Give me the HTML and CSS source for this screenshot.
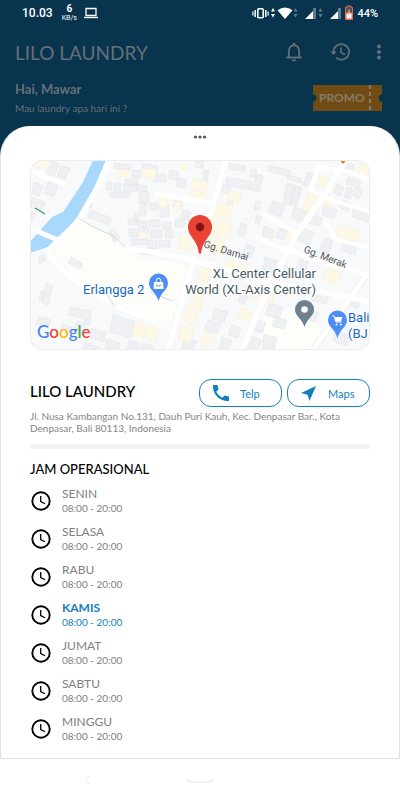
FILE: index.html
```html
<!DOCTYPE html>
<html lang="id">
<head>
  <meta charset="UTF-8">
  <meta name="viewport" content="width=device-width, initial-scale=1">
  <title>Lilo Laundry</title>
  <link rel="stylesheet" href="styles.css">
</head>
<body>

  <div class="status-bar">
    <span class="clock">10.03</span>
    <span class="speed"><b>6</b><small>KB/s</small></span>
    <svg class="laptop" width="16" height="12" viewBox="0 0 16 12">
      <path d="M3 1.5h10v7H3z" fill="none" stroke="#fff" stroke-width="1.3"/>
      <path d="M1 10.5h14" stroke="#fff" stroke-width="1.4"/>
    </svg>
    <svg class="signals" width="102" height="16" viewBox="0 0 102 16">
      <g fill="none" stroke="#fff">
        <rect x="5.8" y="3.8" width="5.4" height="9" rx="1" stroke-width="1.6"/>
        <path d="M3.2 5v7M13.8 5v7" stroke-width="1.5"/>
        <path d="M.9 6.5v4M16.1 6.5v4" stroke-width="1.2"/>
      </g>
      <path d="M21 3l2 3.5h-4zM21 12.5l2-3.5h-4z" fill="#fff"/>
      <path d="M25.5 5.2Q33 0 40.5 5.2L33 14z" fill="#fff"/>
      <path d="M43.5 3l2 3.5h-4zM43.5 12.5l2-3.5h-4zM68.5 3l2 3.5h-4zM68.5 12.5l2-3.5h-4z" fill="#5c7c90"/>
      <path d="M64 3v11H53zM89 3v11H78z" fill="#fff"/>
      <path d="M61 3h3v11h-3zM86 3h3v11h-3z" fill="#5c7c90"/>
      <path d="M93.5 2.5H95V1h4v1.5h1.5v12h-7z" fill="#4c4c55" stroke="#e2684c"/>
      <path d="M94 8h6v6h-6z" fill="#fff" stroke="#e2684c"/>
      <path d="M97 4v6M95.5 7h3" stroke="#f5a28d"/>
    </svg>
    <span class="battery">44%</span>
  </div>

  <header class="app-bar">
    <h1>LILO LAUNDRY</h1>
    <button type="button" aria-label="Notifikasi">
      <svg width="20" height="20" viewBox="0 0 20 20">
        <path d="M4.8 15.5V9a5.2 5.7 0 0 1 10.4 0v6.5" fill="none" stroke="#647078" stroke-width="1.8"/>
        <path d="M2.5 15.5h15" stroke="#647078" stroke-width="1.8"/>
        <path d="M8.7 3.5V2a1.3 1.3 0 0 1 2.6 0v1.5zM8 17.5h4a2 2 0 0 1-4 0z" fill="#647078"/>
      </svg>
    </button>
    <button type="button" aria-label="Riwayat">
      <svg width="20" height="20" viewBox="0 0 20 20">
        <path d="M3.5 10a7.8 7.8 0 1 1 2.5 5.6" fill="none" stroke="#647078" stroke-width="1.8"/>
        <path d="M.3 9.5h6.4L3.5 13z" fill="#647078"/>
        <path d="M11 5.5v5l4 2.2" fill="none" stroke="#647078" stroke-width="1.5"/>
      </svg>
    </button>
    <button type="button" class="more" aria-label="Menu">
      <svg width="6" height="20" viewBox="0 0 6 20" fill="#647078">
        <circle cx="3" cy="4.5" r="2"/><circle cx="3" cy="10" r="2"/><circle cx="3" cy="15.5" r="2"/>
      </svg>
    </button>
  </header>

  <div class="greeting">
    <div>
      <p class="hello">Hai, Mawar</p>
      <p class="ask">Mau laundry apa hari ini ?</p>
    </div>
    <a class="promo" href="#promo">PROMO</a>
  </div>

  <main class="sheet">
    <svg class="handle" width="14" height="4" viewBox="0 0 14 4" fill="#555">
      <circle cx="2.5" cy="2" r="1.6"/><circle cx="7" cy="2" r="1.6"/><circle cx="11.5" cy="2" r="1.6"/>
    </svg>

    <svg class="map" viewBox="0 0 340 190" role="img" aria-label="Peta lokasi Lilo Laundry">
      <rect width="340" height="190" fill="#f8f9fa"/>
      <path d="M48 58L62 66L86 78L108 98L150 102L160 110L140 165L84 146L45 118L24 94L30 82z" fill="#fdfdfa"/>
      <path d="M235 145l45 8 15 25-12 12h-55z" fill="#fdfdfa"/>

      <!-- rumah -->
      <g fill="#eff0f3" stroke="#e4e6e9" stroke-width=".6">
        <path d="M21 1l8 3-5 13-8-3zM31 5l9 3-5 12-8-3zM18 22l10 4-4 11-10-4zM4 22l9 4-4 10-7-3zM2 37l13 5-4 9-11-4zM1 52l5 2-3 6-3-1z"/>
        <path d="M85 3l16 2-1 5-16-2zM102 10h8v8h-8zM113 3l15 3-1 7-15-3zM95 19h13v6H95zM76 22h6v8h-6zM84 23h7v8h-7zM93 24h14v7H93zM80 32h20v6H80zM103 24l14 2-1 7-13-2zM109 32h10v11h-10zM123 14h13v8h-13zM140 10l9 2-2 8-9-2zM148 18l9 2-2 8-9-2zM56 43h6v5h-6zM60 50l22 8-3 7-21-8zM110 43h6v12h-6zM120 43h8v7h-8zM130 44h9v13h-9zM145 38l8 2-2 8-8-2zM153 50l8 2-3 9-8-2zM104 53h5v8h-5zM98 59h9v6h-9zM83 68l8 9-7 5-5-10zM108 61h9v7h-9zM119 60h11v7h-11zM133 62h8v7h-8zM145 60h10v7h-10zM99 69h11v8H99zM112 68h7v7h-7zM121 70h11v8h-11zM135 70h8v8h-8zM101 79h17v6h-17zM119 80h8v9h-8zM129 80h11v7h-11zM110 88h10v6h-10z"/>
        <path d="M166 1l8 1-1 6-8-1zM174 10l5 1-2 12-4-1zM200 3l16 3-1 6-16-3zM197 17l25 5-1 8-25-5zM221 9l6 1-2 8-5-1zM227 14l6 2-4 16-7-2zM193 24l8 2-2 8-7-2zM239 5l22 6-2 6-21-6zM258 15l14 4-1 4-14-4zM257 23l8 3-4 19-8-2zM265 25l7 3-6 19-6-3zM278 12l5 2-6 13-5-2zM317 3l8 2-3 9-7-2zM318 17l13 4-2 7-13-4zM307 24l7 3-4 9-6-3zM317 27l6 2-3 10-6-2zM325 27l8 3-4 9-6-3zM312 40l9 3-3 8-8-3zM294 46l13 4-3 9-12-4zM323 47l17 5-2 10-16-5zM264 47l14 5-4 11-13-5zM243 41l12 4-4 12-13-5zM226 41l5 1-2 8-5-1zM227 55l5 2-3 7-4-1zM211 63l6 2-3 12-7-2zM199 37l5 2-2 8-5-2zM234 66l11 4-3 9-9-3zM249 68l9 3-4 9-8-3zM272 68l11 4-4 13-11-4zM281 55l12 4-4 7-11-3zM295 78l8 3-5 14-9-3zM312 82l15 5-2 8-14-5zM216 84l9 3-4 11-8-2z"/>
        <path d="M8 98l5-4 3 5-6 5zM41 97l12 7-3 5-12-6zM16 123l7 3-5 19-6-2zM11 131l4 1-2 9-4-1zM40 147l21 4-1 14-6-1 1-5-16-4zM32 164l10 3-3 7-9-3zM47 161l9 3-4 12-9-3zM9 157l12 3-2 7-13-3zM60 168l16 4-2 10-14-4zM83 155l21 6-3 17-21-6zM99 180l10 3-2 7h-10zM77 179l13 4-2 7H75zM112 183l11 3-1 4h-13zM54 183l18 5v2H53zM155 177l12 4-5 9h-11z"/>
        <path d="M235 97l12 4-4 12-11-3zM251 104l11 4-3 9-12-3zM211 134l7 3-3 7-7-2zM239 143l14 4-4 12-14-4zM245 157l12 3-3 9-12-3zM185 148l13 4-4 10-12-3zM178 160l13 4-4 10-13-4zM223 159l13 4-4 10-13-4zM220 176l12 4-4 10h-12zM234 174l13 4-3 12h-12zM202 165l9 3-4 10-9-3zM192 177l10 3-4 10h-9zM277 148l12 5-4 9-11-4zM284 130l15 5-3 9-15-4zM270 99l9 3-4 10-9-3zM320 136l11 4-3 9-10-4zM306 170l14 6-3 10-14-5z"/>
      </g>
      <g fill="#fef9e6" stroke="#f6f0de" stroke-width=".6">
        <path d="M8 0h10l-2 9-9-2zM87 10h10v7H87zM113 8l13 2-1 9-14-2zM151 4l8 1-1 5-8-1zM163 19l16 5-4 8-15-5zM161 30l16 4-2 8-15-4zM130 37l8 2-2 9-8-2zM145 41l6 2-2 8-5-1zM109 72h9v5h-9zM158 63l18 5-4 10-17-5zM150 75l15 4-3 12-14-3z"/>
        <path d="M168 20l9 2-2 9-8-2zM184 41l19 5-3 15-18-4zM182 60l20 5-3 14-18-4zM180 77l16 5-3 13-16-4zM198 31l14 4-2 8-13-3zM290 16l8 2-4 9-7-2zM278 33l14 7-6 16-14-7zM297 34l9 4-3 9-12-4zM260 70l5 3-3 7-8-3zM330 4l9 3-3 10-8-3zM309 66l21 5-2 11-22-5z"/>
        <path d="M106 162l11 3-2 13-13-3zM118 165l11 4-3 12-12-4zM168 123l9 3-4 14-11-4zM161 138l12 4-3 10-12-3zM156 151l12 4-3 10-11-3zM151 166l13 4-4 12-12-3zM170 107l11 3-4 12-10-3zM198 100l17 5-4 14-16-4zM215 125l30 10-3 9-29-9zM296 108l14 4-2 12-14-3zM174 172l9 3-5 12-8-3zM211 148l11 3-3 10-12-4zM251 125l12 4-2 9-14-4z"/>
      </g>

      <!-- sungai dan jalan -->
      <path d="M63 0L53 22L33 52L22 57L0 82V93L18 87L29 81L47 57L64 28L76 0z" fill="#a8d8fb"/>
      <g fill="none" stroke="#eff1f3" stroke-width="7">
        <path d="M196 0L181 52L163 102L138 190M316 0L293 37L266 75L233 140L212 190M338 113L283 190"/>
      </g>
      <g fill="none" stroke="#fff" stroke-width="6" stroke-linejoin="round">
        <path d="M79 0L67 28L48 61L18 90Q18 96 28 104Q42 124 84 144" stroke-width="5"/>
        <path d="M0 68L30 81M0 11L36 24M125 34L182 43" stroke-width="5"/>
        <path d="M196 0L181 52L163 102L138 190M316 0L293 37L266 75L233 140L212 190"/>
        <path d="M85 88L118 91L163 100L230 120L340 142M260 90L332 114H340M338 113L283 190" stroke-width="5"/>
        <path d="M289 3L281 30L293 37L340 52M287 7L316 11L340 19M232 54L267 73M225 77L256 90M292 62Q300 64 305 79L340 88" stroke-width="4"/>
        <path d="M85 146L140 168" stroke-width="3"/>
      </g>
      <path d="M48 58L60 65L83 76L95 87M84 146L77 134M120 132L142 141" fill="none" stroke="#c7c8c6" stroke-width=".7"/>
      <path d="M5 48l10 6" stroke="#3c9a5f" stroke-width="1.2"/>
      <path d="M311 0h4v2l-2 2-2-2z" fill="#d98a1c"/>

      <g class="street">
        <text x="173" y="87" transform="rotate(17 173 87)">Gg. Damai</text>
        <text x="273" y="92" transform="rotate(21 273 92)">Gg. Merak</text>
      </g>

      <g class="place">
        <text x="53" y="134" class="blue">Erlangga 2</text>
        <text x="286" y="118" text-anchor="end">XL Center Cellular</text>
        <text x="286" y="134" text-anchor="end">World (XL-Axis Center)</text>
        <text x="318" y="162" class="blue">Bali</text>
        <text x="318" y="178" class="blue">(BJ</text>
      </g>

      <path d="M119 123a9.5 9.5 0 0 1 19 0c0 7-6.5 8-9.5 18-3-10-9.5-11-9.5-18z" fill="#4d8df6"/>
      <path d="M124 122h9l.6 7h-10z" fill="#fff"/>
      <path d="M126.3 122v-1.5a2.2 2.2 0 0 1 4.4 0v1.5" fill="none" stroke="#fff"/>
      <path d="M126 125q2.5 2.5 5 0" fill="none" stroke="#4d8df6"/>

      <path d="M265 149.5a9.5 9.5 0 0 1 19 0c0 7-6.5 8-9.5 17.5-3-9.5-9.5-10.5-9.5-17.5z" fill="#6c828e"/>
      <circle cx="274.5" cy="149.5" r="3.3" fill="#fff"/>

      <path d="M298 160a9.5 9.5 0 0 1 19 0c0 7-6.5 8-9.5 18-3-10-9.5-11-9.5-18z" fill="#4d8df6"/>
      <path d="M302 156h2l2 6h5.5" fill="none" stroke="#fff"/>
      <path d="M304.5 157h8l-1.5 4.5h-5z" fill="#fff"/>
      <circle cx="306.5" cy="164.5" r="1" fill="#fff"/><circle cx="311" cy="164.5" r="1" fill="#fff"/>

      <path d="M158 67a12 12 0 0 1 24 0c0 10-10 13-10.7 26.5h-2.6C168 80 158 77 158 67z" fill="#ea4335"/>
      <circle cx="170" cy="67" r="4.2" fill="#811411"/>

      <text x="7" y="178" class="google"><tspan fill="#4285f4">G</tspan><tspan fill="#ea4335">o</tspan><tspan fill="#fbbc05">o</tspan><tspan fill="#4285f4">g</tspan><tspan fill="#34a853">l</tspan><tspan fill="#ea4335">e</tspan></text>

      <rect x=".5" y=".5" width="339" height="189" rx="12" fill="none" stroke="#ececec"/>
    </svg>

    <div class="store">
      <h2>LILO LAUNDRY</h2>
      <a class="pill" href="#telp">
        <svg width="18" height="18" viewBox="0 0 18 18">
          <path d="M1 1h4.500l1 4.500-2.300 2.300a14 14 0 0 0 6 6l2.300-2.300 4.500 1V17h-1.500C7.500 17 1 10.500 1 2.500z" fill="#1280bd"/>
        </svg>
        Telp
      </a>
      <a class="pill" href="#maps">
        <svg width="18" height="18" viewBox="0 0 18 18">
          <path d="M16 2L1 9l6.500 1.800 2 6.200z" fill="#1280bd"/>
        </svg>
        Maps
      </a>
    </div>
    <p class="address">Jl. Nusa Kambangan No.131, Dauh Puri Kauh, Kec. Denpasar Bar., Kota Denpasar, Bali 80113, Indonesia</p>

    <hr>

    <h3>JAM OPERASIONAL</h3>
    <ul class="hours">
      <li><svg class="jam" viewBox="0 0 20 20"><use href="#jam"/></svg><div><p>SENIN</p><time>08:00 - 20:00</time></div></li>
      <li><svg class="jam" viewBox="0 0 20 20"><use href="#jam"/></svg><div><p>SELASA</p><time>08:00 - 20:00</time></div></li>
      <li><svg class="jam" viewBox="0 0 20 20"><use href="#jam"/></svg><div><p>RABU</p><time>08:00 - 20:00</time></div></li>
      <li class="today"><svg class="jam" viewBox="0 0 20 20"><use href="#jam"/></svg><div><p>KAMIS</p><time>08:00 - 20:00</time></div></li>
      <li><svg class="jam" viewBox="0 0 20 20"><use href="#jam"/></svg><div><p>JUMAT</p><time>08:00 - 20:00</time></div></li>
      <li><svg class="jam" viewBox="0 0 20 20"><use href="#jam"/></svg><div><p>SABTU</p><time>08:00 - 20:00</time></div></li>
      <li><svg class="jam" viewBox="0 0 20 20"><use href="#jam"/></svg><div><p>MINGGU</p><time>08:00 - 20:00</time></div></li>
    </ul>
  </main>

  <nav class="nav-bar">
    <button type="button" aria-label="Kembali">
      <svg width="8" height="12" viewBox="0 0 8 12"><path d="M6 2L2 6l4 4" fill="none" stroke="#e6e6e6"/></svg>
    </button>
    <button type="button" aria-label="Beranda">
      <svg width="28" height="8" viewBox="0 0 28 8"><path d="M1 2q1 4 5 4h16q4 0 5-4" fill="none" stroke="#e2e2e2"/></svg>
    </button>
  </nav>

  <svg class="defs" width="0" height="0">
    <symbol id="jam" viewBox="0 0 20 20">
      <circle cx="10" cy="10" r="8.7" fill="none" stroke="#000" stroke-width="1.9"/>
      <path d="M9.7 5v5.5l4.3 2.3" fill="none" stroke="#000" stroke-width="1.3"/>
    </symbol>
  </svg>

</body>
</html>
```
FILE: styles.css
```css
* {
  box-sizing: border-box;
}

body {
  margin: 0;
  min-height: 100vh;
  display: flex;
  flex-direction: column;
  background: #08344e;
  font-family: Lato, sans-serif;
}

h1, h2, h3, p, ul {
  margin: 0;
  padding: 0;
  font-weight: normal;
}

button {
  padding: 0;
  border: 0;
  background: none;
  display: flex;
}

a {
  text-decoration: none;
}

.status-bar {
  display: flex;
  align-items: center;
  height: 26px;
  padding: 0 22px;
  color: #fff;
  font-family: Roboto, sans-serif;
}

.clock {
  font-size: 12px;
  font-weight: 500;
}

.speed {
  display: flex;
  flex-direction: column;
  align-items: center;
  margin: 0 6px 0 9px;
  font-size: 10px;
  line-height: 10px;
}

.speed small {
  font-size: 7px;
  line-height: 8px;
}

.signals {
  margin-left: auto;
}

.battery {
  margin-left: 3px;
  font-size: 11px;
  font-weight: 500;
}

.app-bar {
  display: flex;
  align-items: center;
  gap: 26px;
  height: 52px;
  padding: 0 18px 0 15px;
}

.app-bar h1 {
  flex: 1;
  font-size: 19px;
  color: #647078;
}

.greeting {
  display: flex;
  justify-content: space-between;
  align-items: center;
  height: 48px;
  padding: 0 18px 8px 15px;
  color: #647078;
}

.hello {
  font-size: 13px;
  line-height: 20px;
  font-weight: bold;
}

.ask {
  font-size: 10px;
  line-height: 18px;
}

/* tiket dengan lekukan di kiri dan kanan */
.promo {
  width: 69px;
  height: 26px;
  padding-left: 6px;
  background:
    radial-gradient(circle at 0 50%, #08344e 3px, transparent 4px),
    radial-gradient(circle at 100% 50%, #08344e 3px, transparent 4px),
    repeating-linear-gradient(#857a6a 0 4px, transparent 4px 7px) 56px 0 / 2px 100% no-repeat,
    #704c14;
  color: #857a6a;
  font-size: 12px;
  line-height: 25px;
  font-weight: bold;
}

.sheet {
  flex: 1;
  padding: 8px 29px 10px;
  border: 1px solid #e2e2e2;
  border-top-color: #fff;
  border-radius: 30px 30px 0 0;
  background: #fff;
}

.handle {
  display: block;
  margin: 0 auto 21px;
}

.map {
  display: block;
  width: 100%;
  border-radius: 12px;
}

.street {
  font: 10px Roboto, sans-serif;
  fill: #50575e;
}

.place {
  font: 13px Roboto, sans-serif;
  fill: #455a64;
  stroke: #fff;
  stroke-width: 2px;
  paint-order: stroke;
}

.place .blue {
  fill: #1967c4;
}

.google {
  font: 500 17px Lato, sans-serif;
}

.store {
  display: flex;
  align-items: center;
  gap: 5px;
  margin-top: 29px;
}

.store h2 {
  flex: 1;
  font-size: 15px;
  line-height: 20px;
  font-weight: 500;
  padding-bottom: 4px;
}

.pill {
  display: flex;
  align-items: center;
  gap: 10px;
  width: 83px;
  height: 28px;
  padding-left: 12px;
  border: 1px solid #1280bd;
  border-radius: 12px;
  color: #1280bd;
  font-size: 11px;
}

.address {
  margin-top: 3px;
  font-size: 10px;
  line-height: 12px;
  color: #858585;
}

hr {
  height: 5px;
  margin: 10px 0;
  border: 0;
  background: #f2f2f2;
}

h3 {
  font-size: 13px;
  line-height: 20px;
  font-weight: 500;
}

.hours {
  list-style: none;
  padding-top: 3px;
}

.hours li {
  display: flex;
  align-items: center;
  gap: 11px;
  height: 38px;
  color: #808080;
}

.jam {
  width: 20px;
  height: 20px;
  margin-left: 1px;
}

.hours p {
  font-size: 12px;
  line-height: 14px;
}

.hours time {
  display: block;
  font-size: 10px;
  line-height: 14px;
}

.hours .today {
  color: #1280bd;
}

.today p {
  font-weight: bold;
}

.nav-bar {
  display: grid;
  grid-template-columns: 1fr 1fr 1fr;
  align-items: center;
  justify-items: center;
  height: 41px;
  padding: 0 30px;
  background: #fff;
}

.defs {
  position: absolute;
}
```
